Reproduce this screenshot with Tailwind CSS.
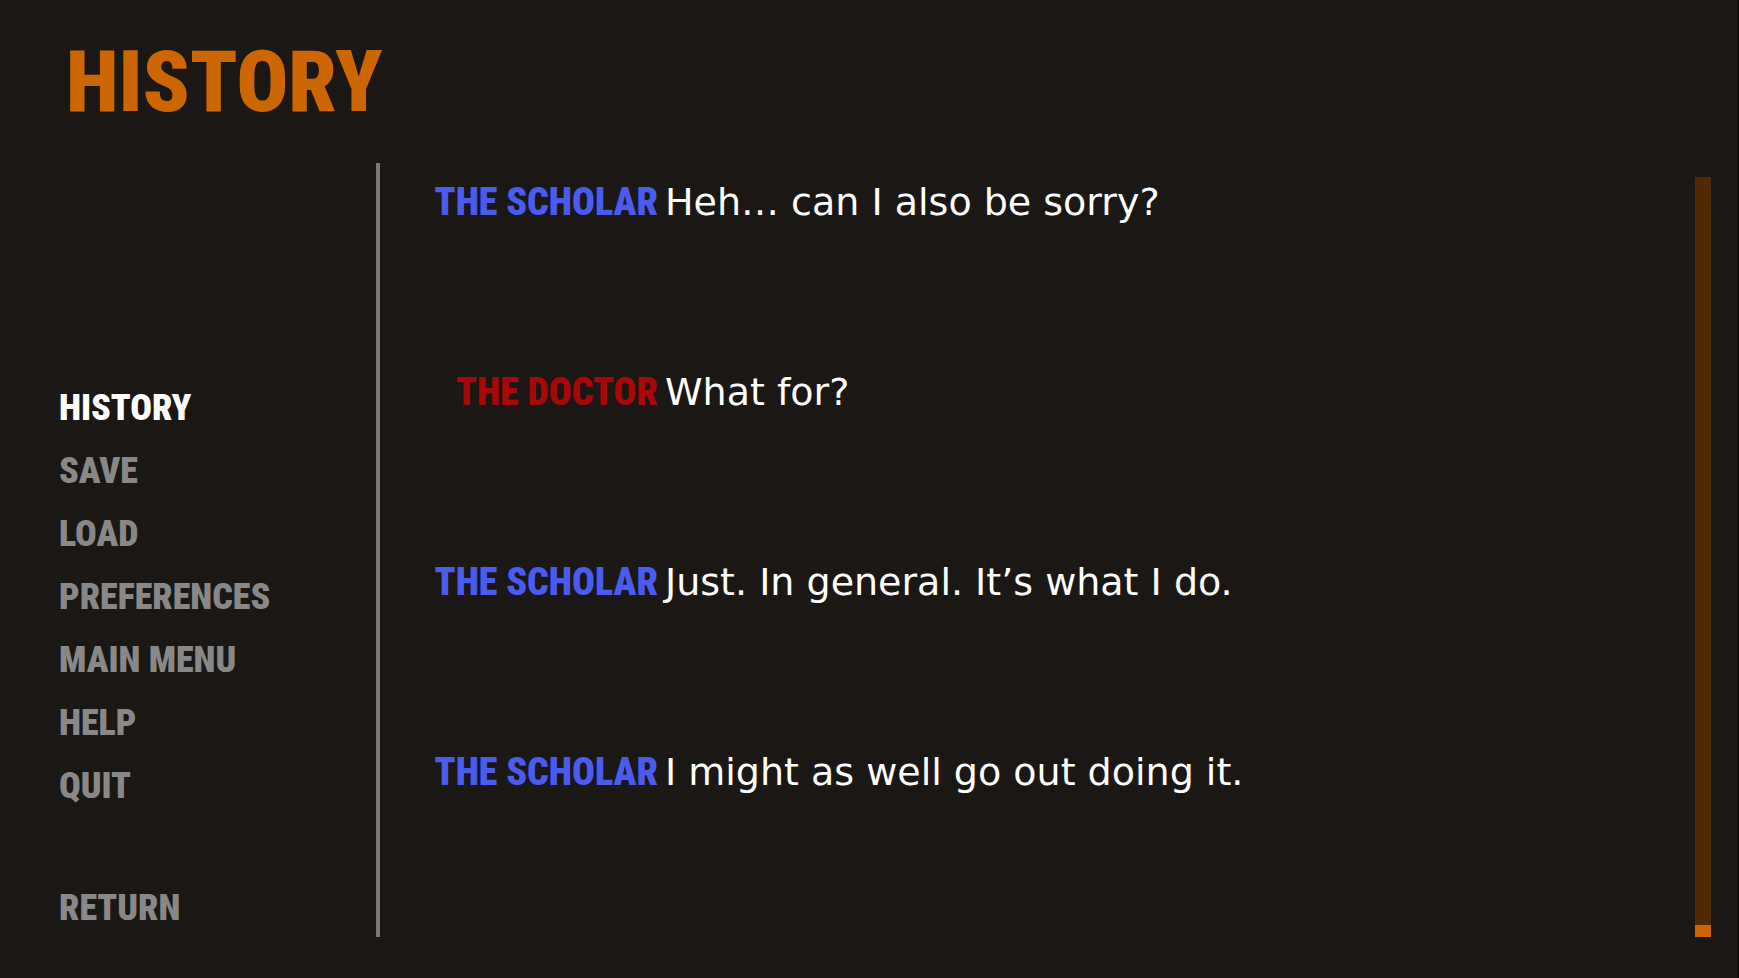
<!DOCTYPE html>
<html lang="en">
<head>
  <meta charset="UTF-8">
  <meta name="viewport" content="width=device-width, initial-scale=1.0">
  <title>History</title>
  <script src="https://cdn.jsdelivr.net/npm/@tailwindcss/browser@4"></script>
</head>
<body class="bg-[#1a1714] text-white min-h-screen flex flex-col pb-[41px] border-r border-black font-['Roboto_Condensed','Roboto',sans-serif]">
  <header class="h-[163px] pt-10 pl-[66px]">
    <h1 class="text-[86px] leading-[84px] font-black text-[#cc6600]">HISTORY</h1>
  </header>

  <div class="flex flex-1">
    <!-- Game menu -->
    <nav class="w-[380px] shrink-0 border-r-4 border-[#7a7a7a] pl-[59px] pt-[216px] flex flex-col items-start gap-[5px] text-[36px] leading-[58px] font-black text-[#888888]">
      <a href="#history" class="text-white" aria-current="page">HISTORY</a>
      <a href="#save">SAVE</a>
      <a href="#load">LOAD</a>
      <a href="#preferences">PREFERENCES</a>
      <a href="#main-menu">MAIN MENU</a>
      <a href="#help">HELP</a>
      <a href="#quit">QUIT</a>
      <a href="#return" class="mt-auto">RETURN</a>
    </nav>

    <!-- Dialogue log -->
    <main class="flex-1 pt-[14px]">
      <dl class="text-[38px] leading-[50px]">
        <div class="flex h-[190px] gap-[7px]">
          <dt class="w-[278px] shrink-0 text-right font-black text-[#4a5cf0]">THE SCHOLAR</dt>
          <dd class="font-['DejaVu_Sans',sans-serif]">Heh… can I also be sorry?</dd>
        </div>
        <div class="flex h-[190px] gap-[7px]">
          <dt class="w-[278px] shrink-0 text-right font-black text-[#a80808]">THE DOCTOR</dt>
          <dd class="font-['DejaVu_Sans',sans-serif]">What for?</dd>
        </div>
        <div class="flex h-[190px] gap-[7px]">
          <dt class="w-[278px] shrink-0 text-right font-black text-[#4a5cf0]">THE SCHOLAR</dt>
          <dd class="font-['DejaVu_Sans',sans-serif]">Just. In general. It’s what I do.</dd>
        </div>
        <div class="flex h-[190px] gap-[7px]">
          <dt class="w-[278px] shrink-0 text-right font-black text-[#4a5cf0]">THE SCHOLAR</dt>
          <dd class="font-['DejaVu_Sans',sans-serif]">I might as well go out doing it.</dd>
        </div>
      </dl>
    </main>

    <div class="w-4 mt-[14px] mr-[27px] flex flex-col justify-end bg-[#522900]" role="scrollbar" aria-label="History" aria-orientation="vertical" aria-valuenow="100">
      <div class="h-3 bg-[#cc6600]"></div>
    </div>
  </div>
</body>
</html>
